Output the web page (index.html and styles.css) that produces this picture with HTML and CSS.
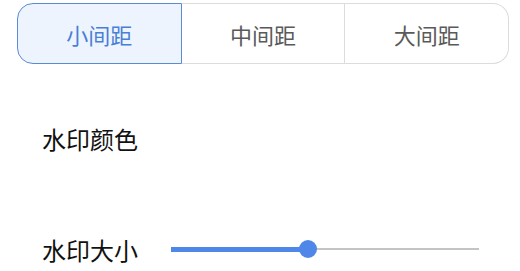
FILE: index.html
```html
<!DOCTYPE html>
<html>
<head>
<meta charset="utf-8">
<link rel="stylesheet" href="styles.css">
</head>
<body>
<div class="page">
  <div class="segmented">
    <div class="seg active">小间距</div>
    <div class="seg">中间距</div>
    <div class="seg">大间距</div>
  </div>
  <div class="row row-color">
    <span class="label">水印颜色</span>
  </div>
  <div class="row row-size">
    <span class="label">水印大小</span>
    <div class="slider">
      <div class="track"></div>
      <div class="fill" style="width:44.5%"></div>
      <div class="thumb" style="left:44.5%"></div>
    </div>
  </div>
</div>
</body>
</html>
```
FILE: styles.css
```css
html, body {
  margin: 0;
  padding: 0;
  background: #ffffff;
}
body {
  font-family: "Noto Sans CJK SC", "Noto Sans", sans-serif;
}
.page {
  width: 520px;
  height: 271px;
  padding: 3px 11px 0 17px;
  box-sizing: border-box;
  display: flex;
  flex-direction: column;
}
.segmented {
  display: flex;
  height: 61px;
}
.seg {
  flex: 1;
  display: flex;
  align-items: center;
  justify-content: center;
  font-size: 22px;
  color: #5a5a5a;
  border-top: 1px solid #dcdcdc;
  border-bottom: 1px solid #dcdcdc;
  border-right: 1px solid #dcdcdc;
  box-sizing: border-box;
}
.seg:first-child {
  border-left: 1px solid #dcdcdc;
  border-radius: 16px 0 0 16px;
}
.seg:last-child {
  border-radius: 0 16px 16px 0;
}
.seg.active {
  background: #eef4fe;
  color: #4a7fd6;
  border: 1.5px solid #5b8ad6;
}
.row {
  display: flex;
  align-items: center;
  height: 44px;
  padding-left: 25px;
}
.row-color {
  margin-top: 52px;
}
.row-size {
  margin-top: 67px;
}
.label {
  font-size: 24px;
  color: #111111;
  width: 129px;
}
.slider {
  position: relative;
  width: 308px;
  height: 20px;
  margin-top: 0;
}
.track {
  position: absolute;
  left: 0;
  right: 0;
  top: 9px;
  height: 2px;
  background: #c4c4c4;
}
.fill {
  position: absolute;
  left: 0;
  top: 8px;
  height: 5px;
  background: #4f87e8;
}
.thumb {
  position: absolute;
  top: 1px;
  width: 18px;
  height: 18px;
  margin-left: -9px;
  border-radius: 50%;
  background: #4f87e8;
}
```
